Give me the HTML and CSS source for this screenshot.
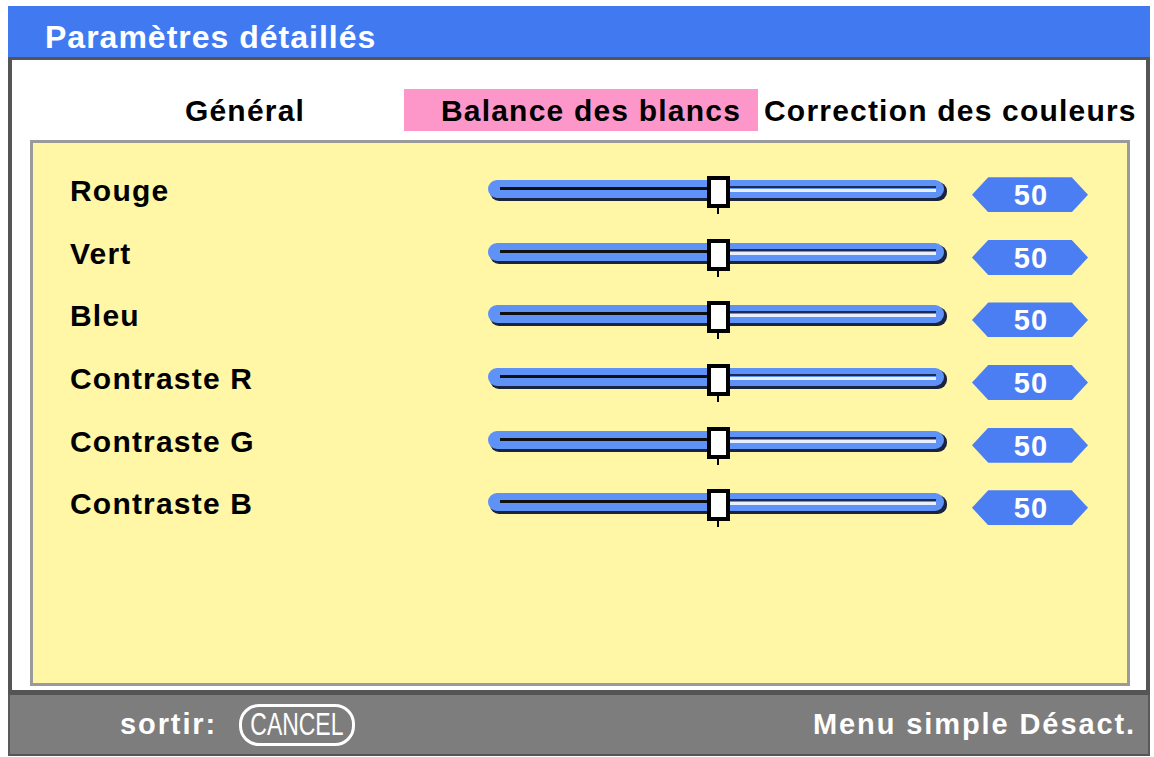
FILE: index.html
```html
<!DOCTYPE html>
<html lang="fr">
<head>
<meta charset="utf-8">
<title>Paramètres détaillés</title>
<link rel="stylesheet" href="styles.css">
</head>
<body>
<div class="window">
  <div class="titlebar">Paramètres détaillés</div>
  <div class="content">
    <div class="tabs">
      <div class="tab tab-general">Général</div>
      <div class="tab tab-active">Balance des blancs</div>
      <div class="tab tab-color">Correction des couleurs</div>
    </div>
    <div class="panel">
      <div class="row">
        <div class="label">Rouge</div>
        <svg class="slider" width="470" height="44" viewBox="0 0 470 44"><rect x="2" y="7" width="457" height="19" rx="9" fill="#1a2340"/><rect x="0" y="5" width="456" height="18" rx="9" fill="#5e92f7"/><rect x="12" y="12" width="220" height="3" fill="#101010"/><rect x="240" y="11" width="208" height="2" fill="#1c2a55"/><rect x="240" y="14" width="208" height="3" fill="#e8f0ff"/><rect x="221" y="3" width="19" height="28" fill="#fff" stroke="#000" stroke-width="4"/><rect x="229" y="33" width="2" height="6" fill="#000"/></svg>
        <div class="value">50</div>
      </div>
      <div class="row">
        <div class="label">Vert</div>
        <svg class="slider" width="470" height="44" viewBox="0 0 470 44"><rect x="2" y="7" width="457" height="19" rx="9" fill="#1a2340"/><rect x="0" y="5" width="456" height="18" rx="9" fill="#5e92f7"/><rect x="12" y="12" width="220" height="3" fill="#101010"/><rect x="240" y="11" width="208" height="2" fill="#1c2a55"/><rect x="240" y="14" width="208" height="3" fill="#e8f0ff"/><rect x="221" y="3" width="19" height="28" fill="#fff" stroke="#000" stroke-width="4"/><rect x="229" y="33" width="2" height="6" fill="#000"/></svg>
        <div class="value">50</div>
      </div>
      <div class="row">
        <div class="label">Bleu</div>
        <svg class="slider" width="470" height="44" viewBox="0 0 470 44"><rect x="2" y="7" width="457" height="19" rx="9" fill="#1a2340"/><rect x="0" y="5" width="456" height="18" rx="9" fill="#5e92f7"/><rect x="12" y="12" width="220" height="3" fill="#101010"/><rect x="240" y="11" width="208" height="2" fill="#1c2a55"/><rect x="240" y="14" width="208" height="3" fill="#e8f0ff"/><rect x="221" y="3" width="19" height="28" fill="#fff" stroke="#000" stroke-width="4"/><rect x="229" y="33" width="2" height="6" fill="#000"/></svg>
        <div class="value">50</div>
      </div>
      <div class="row">
        <div class="label">Contraste R</div>
        <svg class="slider" width="470" height="44" viewBox="0 0 470 44"><rect x="2" y="7" width="457" height="19" rx="9" fill="#1a2340"/><rect x="0" y="5" width="456" height="18" rx="9" fill="#5e92f7"/><rect x="12" y="12" width="220" height="3" fill="#101010"/><rect x="240" y="11" width="208" height="2" fill="#1c2a55"/><rect x="240" y="14" width="208" height="3" fill="#e8f0ff"/><rect x="221" y="3" width="19" height="28" fill="#fff" stroke="#000" stroke-width="4"/><rect x="229" y="33" width="2" height="6" fill="#000"/></svg>
        <div class="value">50</div>
      </div>
      <div class="row">
        <div class="label">Contraste G</div>
        <svg class="slider" width="470" height="44" viewBox="0 0 470 44"><rect x="2" y="7" width="457" height="19" rx="9" fill="#1a2340"/><rect x="0" y="5" width="456" height="18" rx="9" fill="#5e92f7"/><rect x="12" y="12" width="220" height="3" fill="#101010"/><rect x="240" y="11" width="208" height="2" fill="#1c2a55"/><rect x="240" y="14" width="208" height="3" fill="#e8f0ff"/><rect x="221" y="3" width="19" height="28" fill="#fff" stroke="#000" stroke-width="4"/><rect x="229" y="33" width="2" height="6" fill="#000"/></svg>
        <div class="value">50</div>
      </div>
      <div class="row">
        <div class="label">Contraste B</div>
        <svg class="slider" width="470" height="44" viewBox="0 0 470 44"><rect x="2" y="7" width="457" height="19" rx="9" fill="#1a2340"/><rect x="0" y="5" width="456" height="18" rx="9" fill="#5e92f7"/><rect x="12" y="12" width="220" height="3" fill="#101010"/><rect x="240" y="11" width="208" height="2" fill="#1c2a55"/><rect x="240" y="14" width="208" height="3" fill="#e8f0ff"/><rect x="221" y="3" width="19" height="28" fill="#fff" stroke="#000" stroke-width="4"/><rect x="229" y="33" width="2" height="6" fill="#000"/></svg>
        <div class="value">50</div>
      </div>
    </div>
  </div>
  <div class="footer">
    <div class="exit">
      <span class="exit-label">sortir:</span>
      <span class="cancel"><span class="cancel-text">CANCEL</span></span>
    </div>
    <div class="simple">Menu simple Désact.</div>
  </div>
</div>
</body>
</html>
```
FILE: styles.css
```css
html, body {
  margin: 0;
  padding: 0;
  background: #ffffff;
}

body {
  font-family: "Liberation Sans", Arial, sans-serif;
  font-weight: bold;
}

.window {
  margin: 6px 0 0 8px;
  width: 1142px;
}

.titlebar {
  height: 51px;
  background: #4179f0;
  color: #ffffff;
  font-size: 32px;
  line-height: 51px;
  padding-left: 37px;
  padding-top: 6px;
  letter-spacing: 1px;
  box-sizing: border-box;
}

.content {
  height: 638px;
  box-sizing: border-box;
  border-left: 4px solid #555555;
  border-right: 4px solid #555555;
  border-top: 3px solid #555555;
  border-bottom: 5px solid #555555;
  background: #ffffff;
  display: flex;
  flex-direction: column;
}

.tabs {
  height: 80px;
  box-sizing: border-box;
  padding-top: 20px;
  display: flex;
  align-items: center;
  font-size: 30px;
  color: #000000;
  letter-spacing: 1.2px;
}

.tab {
  height: 42px;
  line-height: 44px;
  white-space: nowrap;
}

.tab-general {
  width: 190px;
  margin-left: 138px;
  text-align: center;
}

.tab-active {
  margin-left: 64px;
  width: 354px;
  background: #fe97c9;
  text-align: center;
  box-sizing: border-box;
  padding-left: 20px;
}

.tab-color {
  margin-left: 6px;
}

.panel {
  margin: 0 16px 4px 18px;
  flex: 1;
  background: #fff6a6;
  border: 3px solid #9a9a9a;
  padding-top: 17px;
}

.row {
  height: 62.6px;
  display: flex;
  align-items: center;
}

.label {
  width: 455px;
  box-sizing: border-box;
  padding-left: 37px;
  font-size: 30px;
  color: #000000;
  letter-spacing: 1.2px;
  white-space: nowrap;
}

.slider {
  display: block;
  margin-top: 12px;
}

.value {
  margin-left: 14px;
  margin-top: 7px;
  width: 116px;
  height: 35px;
  background: #4a7ef2;
  clip-path: polygon(0 50%, 14% 0, 86% 0, 100% 50%, 86% 100%, 14% 100%);
  color: #ffffff;
  font-size: 29px;
  line-height: 36px;
  text-align: center;
  padding-left: 2px;
  letter-spacing: 1px;
  box-sizing: border-box;
}

.footer {
  height: 61px;
  box-sizing: border-box;
  background: #7d7d7d;
  border-left: 2px solid #5a5a5a;
  border-right: 2px solid #5a5a5a;
  border-bottom: 2px solid #555555;
  display: flex;
  align-items: center;
  justify-content: space-between;
  color: #ffffff;
  font-size: 29px;
  letter-spacing: 1.9px;
}

.exit {
  display: flex;
  align-items: center;
  margin-left: 110px;
}

.exit-label {
  margin-right: 22px;
}

.cancel {
  width: 110px;
  height: 36px;
  border: 3px solid #ffffff;
  border-radius: 20px;
  display: flex;
  align-items: center;
  justify-content: center;
  overflow: hidden;
}

.cancel-text {
  display: inline-block;
  font-weight: normal;
  font-size: 31px;
  letter-spacing: 0;
  transform: scaleX(0.74);
}

.simple {
  margin-right: 12px;
}
```
